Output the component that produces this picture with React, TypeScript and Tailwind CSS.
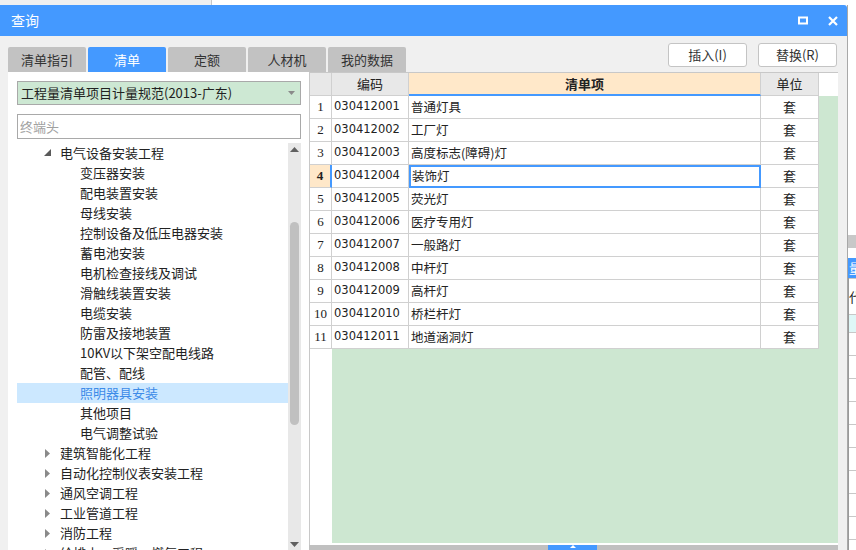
import React from "react";

const tabs = ["清单指引", "清单", "定额", "人材机", "我的数据"];

const children = [
  "变压器安装",
  "配电装置安装",
  "母线安装",
  "控制设备及低压电器安装",
  "蓄电池安装",
  "电机检查接线及调试",
  "滑触线装置安装",
  "电缆安装",
  "防雷及接地装置",
  "10KV以下架空配电线路",
  "配管、配线",
  "照明器具安装",
  "其他项目",
  "电气调整试验",
];

const siblings = [
  "建筑智能化工程",
  "自动化控制仪表安装工程",
  "通风空调工程",
  "工业管道工程",
  "消防工程",
  "给排水、采暖、燃气工程",
];

const rows = [
  ["030412001", "普通灯具"],
  ["030412002", "工厂灯"],
  ["030412003", "高度标志(障碍)灯"],
  ["030412004", "装饰灯"],
  ["030412005", "荧光灯"],
  ["030412006", "医疗专用灯"],
  ["030412007", "一般路灯"],
  ["030412008", "中杆灯"],
  ["030412009", "高杆灯"],
  ["030412010", "桥栏杆灯"],
  ["030412011", "地道涵洞灯"],
];

function TreeArrow({ open }: { open?: boolean }) {
  if (open) {
    return (
      <svg width="8" height="8" viewBox="0 0 8 8" className="mr-[8px]">
        <polygon points="7,0 7,7 0,7" fill="#5a5a5a" />
      </svg>
    );
  }
  return (
    <svg width="6" height="9" viewBox="0 0 6 9" className="ml-[1px] mr-[9px]">
      <polygon points="0,0 5,4.5 0,9" fill="#8a8a8a" />
    </svg>
  );
}

export default function App() {
  return (
    <div className="w-[856px] h-[550px] overflow-hidden bg-white flex flex-col font-['Microsoft_YaHei','Noto_Sans_CJK_SC',sans-serif] text-[12px] text-[#222]">
      {/* strip behind the dialog */}
      <div className="h-[5px] flex shrink-0">
        <div className="w-[212px] bg-[#f0f0f0] border-r border-[#c8c8c8]" />
        <div className="flex-1 bg-white" />
      </div>

      <div className="flex flex-1 min-h-0">
        {/* dialog */}
        <div className="w-[848px] shrink-0 flex flex-col border-r border-[#a8a8a8]">
          <div className="h-[31px] shrink-0 bg-[#4499ff] rounded-tr-[3px] flex items-center pl-[11px] pr-[9px] text-white text-[14px]">
            <span>查询</span>
            <div className="ml-auto flex items-center gap-[20px]">
              <svg width="10" height="9" viewBox="0 0 10 9">
                <rect x="1" y="1.5" width="8" height="6" fill="none" stroke="white" strokeWidth="2" />
              </svg>
              <svg width="10" height="10" viewBox="0 0 10 10">
                <path d="M1 1 L9 9 M9 1 L1 9" stroke="white" strokeWidth="2.2" />
              </svg>
            </div>
          </div>

          <div className="flex-1 min-h-0 bg-[#f0f0f0] pl-[8px] pr-[9px] flex flex-col">
            <div className="h-[36px] shrink-0 flex items-end relative">
              <div className="flex gap-[2px]">
                {tabs.map((t) => (
                  <div
                    key={t}
                    className={
                      t === "清单"
                        ? "w-[78px] h-[25px] rounded-t-[2px] bg-[#4499ff] text-white text-[13px] flex items-center justify-center"
                        : "w-[78px] h-[25px] rounded-t-[2px] bg-[#c2c2c2] text-[#333] text-[13px] flex items-center justify-center"
                    }
                  >
                    {t}
                  </div>
                ))}
              </div>
              <div className="ml-auto mb-[5px] mr-[1px] flex gap-[11px]">
                <div className="w-[79px] h-[24px] bg-white border border-[#c4c4c4] rounded-[3px] flex items-center justify-center text-[13px] text-[#333]">
                  插入(I)
                </div>
                <div className="w-[79px] h-[24px] bg-white border border-[#c4c4c4] rounded-[3px] flex items-center justify-center text-[13px] text-[#333]">
                  替换(R)
                </div>
              </div>
            </div>

            <div className="flex-1 min-h-0 flex bg-white">
              {/* left panel */}
              <div className="w-[294px] shrink-0 flex flex-col pl-[9px] pr-[1px] pt-[9px]">
                <div className="h-[24px] shrink-0 bg-[#cde8d3] border border-[#a9a9a9] flex items-center pl-[3px] pr-[5px] text-[13px]">
                  <span>工程量清单项目计量规范(2013-广东)</span>
                  <svg width="7" height="4" viewBox="0 0 7 4" className="ml-auto">
                    <polygon points="0,0 7,0 3.5,4" fill="#8a8a8a" />
                  </svg>
                </div>
                <div className="h-[25px] shrink-0 mt-[9px] bg-white border border-[#a9a9a9] flex items-center pl-[2px] text-[13px] text-[#a0a0a0]">
                  终端头
                </div>
                <div className="flex-1 min-h-0 mt-[4px] flex">
                  <div className="flex-1 overflow-hidden">
                    <div className="h-[20px] flex items-center pl-[27px] text-[13px]">
                      <TreeArrow open />
                      电气设备安装工程
                    </div>
                    {children.map((c) => (
                      <div
                        key={c}
                        className={
                          c === "照明器具安装"
                            ? "h-[20px] flex items-center pl-[63px] text-[13px] bg-[#cce8ff] text-[#3d8be8]"
                            : "h-[20px] flex items-center pl-[63px] text-[13px]"
                        }
                      >
                        {c}
                      </div>
                    ))}
                    {siblings.map((s) => (
                      <div key={s} className="h-[20px] flex items-center pl-[27px] text-[13px]">
                        <TreeArrow />
                        {s}
                      </div>
                    ))}
                  </div>
                  <div className="w-[13px] bg-[#e8e8e8] flex flex-col items-center">
                    <svg width="9" height="5" viewBox="0 0 9 5" className="mt-[4px]">
                      <polygon points="0,5 9,5 4.5,0" fill="#606060" />
                    </svg>
                    <div className="w-[9px] h-[203px] mt-[70px] rounded-full bg-[#c0c0c0]" />
                    <svg width="9" height="5" viewBox="0 0 9 5" className="mt-auto mb-[3px]">
                      <polygon points="0,0 9,0 4.5,5" fill="#606060" />
                    </svg>
                  </div>
                </div>
              </div>

              {/* right panel: table */}
              <div className="flex-1 min-w-0 pl-[7px] flex flex-col">
                <div className="flex-1 min-h-0 flex flex-col border-l border-t border-[#c8c8c8]">
                  <div className="h-[23px] shrink-0 flex text-[13px]">
                    <div className="w-[22px] bg-[#e8e8e8] border-r border-b border-[#d0d0d0]" />
                    <div className="w-[77px] bg-[#e8e8e8] border-r border-b border-[#d0d0d0] flex items-center justify-center">
                      编码
                    </div>
                    <div className="w-[352px] bg-[#ffe8c9] border-r border-b-2 border-r-[#d0d0d0] border-b-[#4499ff] flex items-center justify-center font-bold">
                      清单项
                    </div>
                    <div className="w-[58px] bg-[#e8e8e8] border-r border-b border-[#d0d0d0] flex items-center justify-center">
                      单位
                    </div>
                    <div className="flex-1 bg-white" />
                  </div>
                  {rows.map(([code, name], i) => {
                    const sel = i === 3;
                    return (
                      <div key={code} className="h-[23px] shrink-0 flex">
                        <div
                          className={
                            sel
                              ? "w-[22px] bg-[#ffe8c9] border-r-2 border-b border-r-[#4499ff] border-b-[#d0d0d0] flex items-center justify-center font-['Liberation_Serif',serif] font-bold text-[13px]"
                              : "w-[22px] bg-white border-r border-b border-[#d0d0d0] flex items-center justify-center font-['Liberation_Serif',serif] text-[13px]"
                          }
                        >
                          {i + 1}
                        </div>
                        <div className="w-[77px] bg-white border-r border-b border-[#d0d0d0] flex items-center pl-[2px] font-['DejaVu_Sans',sans-serif] text-[11.5px]">
                          {code}
                        </div>
                        <div
                          className={
                            sel
                              ? "w-[352px] bg-white border-2 border-[#4499ff] flex items-center pl-[1px] text-[12.5px]"
                              : "w-[352px] bg-white border-r border-b border-[#d0d0d0] flex items-center pl-[2px] text-[12.5px]"
                          }
                        >
                          {name}
                        </div>
                        <div className="w-[58px] bg-white border-r border-b border-[#d0d0d0] flex items-center justify-center text-[13px]">
                          套
                        </div>
                        <div className="flex-1 bg-[#cde7d1]" />
                      </div>
                    );
                  })}
                  <div className="flex-1 flex">
                    <div className="w-[22px] bg-white" />
                    <div className="flex-1 bg-[#cde7d1]" />
                  </div>
                  <div className="h-[2px] bg-white shrink-0" />
                </div>
                <div className="h-[5px] shrink-0 bg-[#c0c0c0] flex">
                  <div className="w-[239px]" />
                  <div className="w-[49px] bg-[#4499ff] flex justify-center">
                    <svg width="6" height="3" viewBox="0 0 6 3">
                      <polygon points="0,3 6,3 3,0" fill="white" />
                    </svg>
                  </div>
                </div>
              </div>
            </div>
          </div>
        </div>

        {/* application behind the dialog */}
        <div className="flex-1 min-w-0 flex flex-col bg-white">
          <div className="h-[230px] shrink-0 bg-white" />
          <div className="h-[13px] shrink-0 bg-[#c8c8c8]" />
          <div className="h-[10px] shrink-0" />
          <div className="h-[20px] shrink-0 bg-[#4499ff] text-white text-[13px] overflow-hidden pl-[1px] leading-[20px]">量</div>
          <div className="flex-1 border-l border-[#9a9a9a] flex flex-col">
            <div className="h-[37px] shrink-0 border-t border-b border-[#c8c8c8] text-[13px] overflow-hidden flex items-center">代</div>
            <div className="h-[18px] shrink-0 bg-[#dff7f7] border-b border-[#c8c8c8]" />
            {[0, 1, 2, 3, 4, 5, 6, 7, 8].map((k) => (
              <div key={k} className="h-[23px] shrink-0 border-b border-[#c8c8c8]" />
            ))}
          </div>
        </div>
      </div>
    </div>
  );
}
